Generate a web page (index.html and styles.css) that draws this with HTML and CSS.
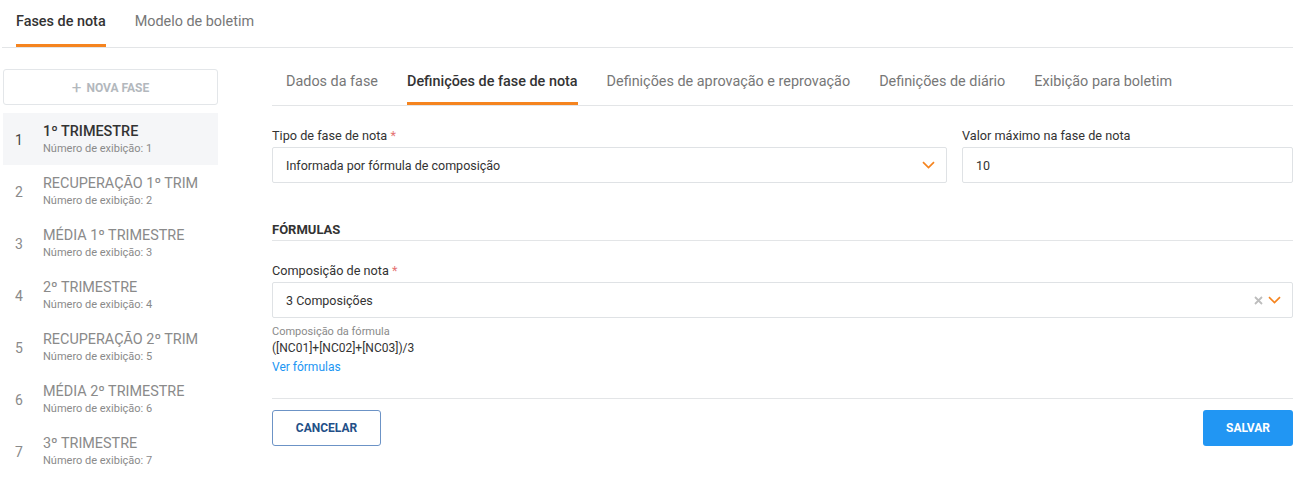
FILE: index.html
```html
<!DOCTYPE html>
<html lang="pt">
<head>
<meta charset="utf-8">
<title>Fases de nota</title>
<link rel="stylesheet" href="styles.css">
</head>
<body>
<div class="app">
  <nav class="top-tabs">
    <span class="top-tab active">Fases de nota</span>
    <span class="top-tab">Modelo de boletim</span>
  </nav>

  <div class="main">
    <aside class="sidebar">
      <button class="new-btn"><span class="plus">+</span> NOVA FASE</button>
      <ul class="phase-list">
        <li class="phase selected"><span class="num">1</span><div class="info"><div class="title">1º TRIMESTRE</div><div class="sub">Número de exibição: 1</div></div></li>
        <li class="phase"><span class="num">2</span><div class="info"><div class="title">RECUPERAÇÃO 1º TRIM</div><div class="sub">Número de exibição: 2</div></div></li>
        <li class="phase"><span class="num">3</span><div class="info"><div class="title">MÉDIA 1º TRIMESTRE</div><div class="sub">Número de exibição: 3</div></div></li>
        <li class="phase"><span class="num">4</span><div class="info"><div class="title">2º TRIMESTRE</div><div class="sub">Número de exibição: 4</div></div></li>
        <li class="phase"><span class="num">5</span><div class="info"><div class="title">RECUPERAÇÃO 2º TRIM</div><div class="sub">Número de exibição: 5</div></div></li>
        <li class="phase"><span class="num">6</span><div class="info"><div class="title">MÉDIA 2º TRIMESTRE</div><div class="sub">Número de exibição: 6</div></div></li>
        <li class="phase"><span class="num">7</span><div class="info"><div class="title">3º TRIMESTRE</div><div class="sub">Número de exibição: 7</div></div></li>
      </ul>
    </aside>

    <section class="content">
      <nav class="sub-tabs">
        <span class="sub-tab">Dados da fase</span>
        <span class="sub-tab active">Definições de fase de nota</span>
        <span class="sub-tab">Definições de aprovação e reprovação</span>
        <span class="sub-tab">Definições de diário</span>
        <span class="sub-tab">Exibição para boletim</span>
      </nav>

      <div class="row">
        <div class="field">
          <label class="label">Tipo de fase de nota <span class="req">*</span></label>
          <div class="input select">
            <span>Informada por fórmula de composição</span>
            <svg class="chev" width="13" height="8" viewBox="0 0 13 8"><path d="M1 1.2l5.5 5.3 5.5-5.3" fill="none" stroke="#f5841f" stroke-width="1.7"/></svg>
          </div>
        </div>
        <div class="field">
          <label class="label">Valor máximo na fase de nota</label>
          <div class="input"><span>10</span></div>
        </div>
      </div>

      <h3 class="section">FÓRMULAS</h3>

      <div class="field">
        <label class="label">Composição de nota <span class="req">*</span></label>
        <div class="input select">
          <span>3 Composições</span>
          <span class="icons">
            <svg class="clear" width="9" height="9" viewBox="0 0 9 9"><path d="M1 1l7 7M8 1l-7 7" stroke="#bdbdbd" stroke-width="1.8"/></svg>
            <svg class="chev" width="13" height="8" viewBox="0 0 13 8"><path d="M1 1.2l5.5 5.3 5.5-5.3" fill="none" stroke="#f5841f" stroke-width="1.7"/></svg>
          </span>
        </div>
      </div>

      <div class="formula-label">Composição da fórmula</div>
      <div class="formula">([NC01]+[NC02]+[NC03])/3</div>
      <a class="link">Ver fórmulas</a>

      <div class="actions">
        <button class="btn btn-outline">CANCELAR</button>
        <button class="btn btn-primary">SALVAR</button>
      </div>
    </section>
  </div>
</div>
</body>
</html>
```

FILE: styles.css
```css
* { box-sizing: border-box; }

body {
  margin: 0;
  background: #fff;
  font-family: Roboto, "Noto Sans", "Liberation Sans", sans-serif;
  color: #333;
}

.app {
  width: 1293px;
  padding-left: 2px;
}

/* top tabs */
.top-tabs {
  display: flex;
  gap: 29px;
  padding-left: 14px;
  border-bottom: 1px solid #e3e5e7;
}

.top-tab {
  font-size: 14.4px;
  line-height: 18px;
  padding: 13px 0 13px;
  border-bottom: 3px solid transparent;
  color: #777;
}

.top-tab.active {
  color: #333;
  font-weight: 500;
  border-bottom-color: #f5841f;
}

/* main */
.main {
  display: flex;
  padding-left: 1px;
  margin-top: 21px;
}

.sidebar {
  width: 215px;
  flex: none;
}

.new-btn {
  display: block;
  width: 100%;
  height: 36px;
  background: #fff;
  border: 1px solid #e3e6e9;
  border-radius: 3px;
  font-family: inherit;
  font-size: 12px;
  font-weight: 700;
  color: #b3b8bd;
  margin-bottom: 8px;
}

.new-btn .plus {
  font-size: 17px;
  font-weight: 400;
  vertical-align: -1px;
  margin-right: 2px;
}

.phase-list {
  list-style: none;
  margin: 0;
  padding: 0;
}

.phase {
  display: flex;
  align-items: center;
  height: 52px;
  padding-left: 12px;
}

.phase.selected {
  background: #f5f6f8;
}

.num {
  width: 28px;
  font-size: 14px;
  color: #8a8a8a;
  padding-top: 1px;
}

.selected .num { color: #444; }

.title {
  font-size: 14.4px;
  line-height: 17px;
  color: #8a8a8a;
}

.selected .title { color: #333; font-weight: 500; }

.sub {
  font-size: 11px;
  line-height: 14px;
  color: #8a8a8a;
  margin-top: 2px;
}

/* content */
.content {
  margin-left: 54px;
  flex: 1;
}

.sub-tabs {
  display: flex;
  gap: 29px;
  padding-left: 14px;
  border-bottom: 1px solid #e3e5e7;
}

.sub-tab {
  font-size: 14.4px;
  line-height: 18px;
  padding: 4px 0 11px;
  border-bottom: 3px solid transparent;
  color: #777;
}

.sub-tab.active {
  color: #333;
  font-weight: 500;
  border-bottom-color: #f5841f;
}

.row {
  display: grid;
  grid-template-columns: 1fr 331px;
  gap: 15px;
  margin-top: 22px;
}

.label {
  display: block;
  font-size: 12.7px;
  line-height: 16px;
  color: #333;
  margin-bottom: 3px;
}

.req { color: #e57373; }

.input {
  height: 36px;
  border: 1px solid #dfe2e5;
  border-radius: 2px;
  display: flex;
  align-items: center;
  justify-content: space-between;
  padding: 0 11px 0 13px;
  font-size: 12.5px;
  color: #333;
}

.icons {
  display: flex;
  align-items: center;
  gap: 5px;
}

.section {
  margin: 39px 0 22px;
  font-size: 13px;
  line-height: 16px;
  font-weight: 700;
  color: #333;
  padding-bottom: 2px;
  border-bottom: 1px solid #e3e5e7;
}

.formula-label {
  margin-top: 7px;
  font-size: 11px;
  line-height: 14px;
  color: #8a8a8a;
}

.formula {
  font-size: 12px;
  line-height: 18px;
  color: #333;
}

.link {
  display: block;
  font-size: 12px;
  line-height: 18px;
  margin-top: 1px;
  color: #2196f3;
}

.actions {
  display: flex;
  justify-content: space-between;
  margin-top: 22px;
  padding-top: 11px;
  border-top: 1px solid #e3e5e7;
}

.btn {
  height: 36px;
  border-radius: 3px;
  font-family: inherit;
  font-size: 12px;
  font-weight: 700;
}

.btn-outline {
  width: 109px;
  background: #fff;
  border: 1px solid #6c93c6;
  color: #234f87;
}

.btn-primary {
  width: 90px;
  background: #2196f3;
  border: none;
  color: #fff;
}
```
